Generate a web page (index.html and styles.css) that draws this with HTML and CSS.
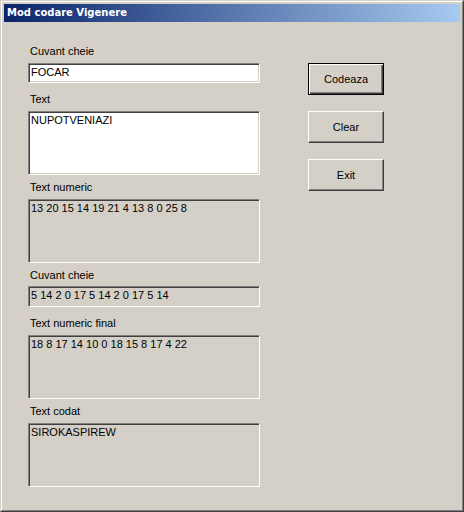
FILE: index.html
```html
<!DOCTYPE html>
<html>
<head>
<meta charset="utf-8">
<link rel="stylesheet" href="styles.css">
</head>
<body>
<div class="window">
  <div class="frame">
    <div class="titlebar">Mod codare Vigenere</div>
    <div class="content">
      <div class="fields">
        <div class="label first">Cuvant cheie</div>
        <div class="box white single">FOCAR</div>
        <div class="label wide-gap">Text</div>
        <div class="box white multi">NUPOTVENIAZI</div>
        <div class="label">Text numeric</div>
        <div class="box multi">13 20 15 14 19 21 4 13 8 0 25 8</div>
        <div class="label tight">Cuvant cheie</div>
        <div class="box single tall">5 14 2 0 17 5 14 2 0 17 5 14</div>
        <div class="label wide-gap">Text numeric final</div>
        <div class="box multi">18 8 17 14 10 0 18 15 8 17 4 22</div>
        <div class="label">Text codat</div>
        <div class="box multi">SIROKASPIREW</div>
      </div>
      <div class="buttons">
        <button class="btn default">Codeaza</button>
        <button class="btn">Clear</button>
        <button class="btn">Exit</button>
      </div>
    </div>
  </div>
</div>
</body>
</html>
```

FILE: styles.css
```css
html, body {
  margin: 0;
  padding: 0;
  background: #d4d0c8;
}

.window {
  width: 464px;
  height: 512px;
  box-sizing: border-box;
  border: 1px solid;
  border-color: #d4d0c8 #404040 #404040 #d4d0c8;
  background: #d4d0c8;
}

.frame {
  height: 100%;
  box-sizing: border-box;
  border: 1px solid;
  border-color: #ffffff #808080 #808080 #ffffff;
  padding: 2px;
}

.titlebar {
  height: 18px;
  line-height: 18px;
  padding-left: 3px;
  background: linear-gradient(to right, #0a246a, #a6caf0);
  color: #ffffff;
  font-family: "DejaVu Sans", "Liberation Sans", sans-serif;
  font-weight: bold;
  font-size: 10px;
  white-space: nowrap;
}

.content {
  display: flex;
  gap: 48px;
  padding: 23px 0 0 24px;
  font-family: "Liberation Sans", Arial, sans-serif;
  font-size: 11px;
  color: #000000;
}

.fields {
  display: flex;
  flex-direction: column;
  width: 232px;
}

.label {
  height: 13px;
  line-height: 13px;
  margin: 6px 0 5px 2px;
  white-space: nowrap;
}

.label.first {
  margin-top: 0;
}

.label.wide-gap {
  margin-top: 10px;
}

.label.tight {
  margin-top: 6px;
}

.box {
  box-sizing: border-box;
  border: 1px solid;
  border-color: #808080 #ffffff #ffffff #808080;
  box-shadow: inset 1px 1px 0 #404040, inset -1px -1px 0 #d4d0c8;
  background: #d4d0c8;
  padding: 2px 2px 0 2px;
  line-height: 13px;
  white-space: nowrap;
  overflow: hidden;
}

.box.white {
  background: #ffffff;
}

.box.single {
  height: 20px;
}

.box.tall {
  height: 21px;
  margin-top: -1px;
}

.box.multi {
  height: 64px;
}

.buttons {
  display: flex;
  flex-direction: column;
  gap: 16px;
  padding-top: 18px;
}

.btn {
  width: 76px;
  height: 32px;
  box-sizing: border-box;
  margin: 0;
  padding: 0;
  background: #d4d0c8;
  font-family: "Liberation Sans", Arial, sans-serif;
  font-size: 11px;
  color: #000000;
  text-align: center;
  border: 1px solid;
  border-color: #ffffff #404040 #404040 #ffffff;
  box-shadow: inset -1px -1px 0 #808080;
}

.btn.default {
  border: 1px solid #000000;
  box-shadow: inset 1px 1px 0 #ffffff, inset -1px -1px 0 #404040, inset -2px -2px 0 #808080;
}
```
